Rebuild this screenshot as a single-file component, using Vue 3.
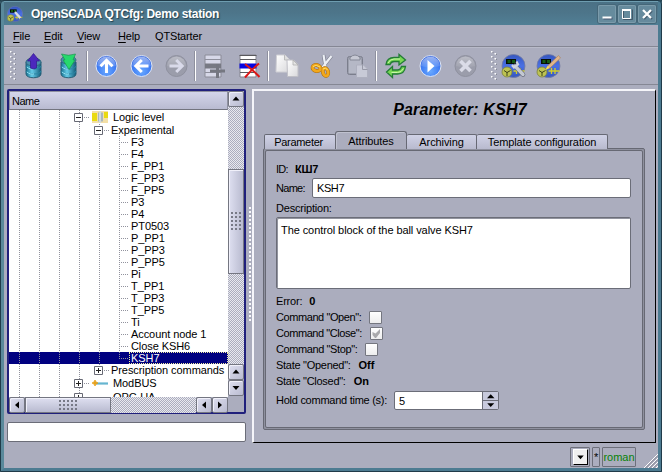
<script setup>
const leaves = ['F3', 'F4', 'F_PP1', 'F_PP3', 'F_PP5', 'P3', 'P4', 'PT0503', 'P_PP1', 'P_PP3', 'P_PP5', 'Pi', 'T_PP1', 'T_PP3', 'T_PP5', 'Ti', 'Account node 1', 'Close KSH6', 'KSH7']
const rows = [
  { text: 'Logic level', guides: 3, box: '-', icon: 'level', tall: true },
  { text: 'Experimental', guides: 4, box: '-' },
  ...leaves.map((text, i) => ({ text, guides: 5, last: i === leaves.length - 1, selected: text === 'KSH7' })),
  { text: 'Prescription commands', guides: 4, box: '+', end: true },
  { text: 'ModBUS', guides: 3, box: '+', icon: 'bus', tall: true },
  { text: 'OPC-UA', guides: 3, box: '+', icon: 'none', tall: true }
]
const tabs = [
  { text: 'Parameter', cls: 't1' },
  { text: 'Attributes', cls: 't2 active' },
  { text: 'Archiving', cls: 't3' },
  { text: 'Template configuration', cls: 't4' }
]
const menu = [['F', 'ile', 'm1'], ['E', 'dit', 'm2'], ['V', 'iew', 'm3'], ['H', 'elp', 'm4']]
</script>

<template>
  <div class="window">
    <svg width="0" height="0" class="defs">
      <defs>
        <radialGradient id="blue" cx=".5" cy=".75" r=".75"><stop offset="0" stop-color="#69a9ff" /><stop offset=".6" stop-color="#3e7cf4" /><stop offset="1" stop-color="#2456d8" /></radialGradient>
        <linearGradient id="shine" x1="0" y1="0" x2="0" y2="1"><stop offset="0" stop-color="#fff" stop-opacity=".55" /><stop offset="1" stop-color="#fff" stop-opacity=".08" /></linearGradient>
        <linearGradient id="cyl" x1="0" x2="1"><stop offset="0" stop-color="#17708f" /><stop offset=".4" stop-color="#64cbe8" /><stop offset="1" stop-color="#145c7a" /></linearGradient>
        <linearGradient id="page" x1="0" y1="0" x2="1" y2="1"><stop offset="0" stop-color="#fff" /><stop offset="1" stop-color="#d9d9dc" /></linearGradient>
        <linearGradient id="globe" x1="0" y1="0" x2="0" y2="1"><stop offset="0" stop-color="#3556c0" /><stop offset=".5" stop-color="#4a70e4" /><stop offset="1" stop-color="#3557bf" /></linearGradient>
        <g id="scada">
          <circle cx="12" cy="12" r="11.5" fill="url(#globe)" stroke="#747ba0" stroke-width=".8" />
          <rect x="4.500" y="5" width="10" height="5" fill="#061006" />
          <path d="M6 6h3v3H6zM10.500 6h3v3h-3z" fill="#145a14" />
          <path d="M12 17h11M15 14v6M18.500 14v6" stroke="#d5cf27" stroke-width="1.300" />
          <circle cx="5.500" cy="18" r="5" fill="#bdc352" stroke="#7c813a" stroke-width=".8" />
          <path d="M2.500 16.500l3 2 3.500-2M5.500 18v4" stroke="#3f441d" fill="none" />
        </g>
      </defs>
    </svg>

    <header class="titlebar">
      <svg class="appicon" viewBox="0 0 24 24"><use href="#scada" /><path d="M12 9l8 9" stroke="#d9dde5" stroke-width="3.500" /></svg>
      <span class="wtitle">OpenSCADA QTCfg: Demo station</span>
      <div class="wbtns">
        <svg viewBox="0 0 18 18"><path d="M5.500 13.500h9" stroke="#335" stroke-width="2" opacity=".6" /><path d="M4.500 12.500h9" stroke="#fff" stroke-width="2" /></svg>
        <svg viewBox="0 0 18 18"><path d="M5.500 6v8.500h9v-10" stroke="#345" fill="none" opacity=".7" /><path d="M4.500 5.500v8h8v-8z" stroke="#fff" fill="none" /><path d="M4 5h9" stroke="#fff" stroke-width="2" /></svg>
        <svg viewBox="0 0 18 18"><path d="M6 6l8 8M14 6l-8 8" stroke="#345" stroke-width="2" opacity=".6" /><path d="M5 5l8 8M13 5l-8 8" stroke="#fff" stroke-width="2.200" /></svg>
      </div>
    </header>

    <nav class="menubar">
      <span v-for="m in menu" :key="m[1]" :class="m[2]"><u>{{ m[0] }}</u>{{ m[1] }}</span>
      <span class="m5">QTStarter</span>
    </nav>

    <div class="toolbar">
      <svg class="handle" viewBox="0 0 6 30"><g fill="#fff"><path v-for="n in 6" :key="n" :d="`M0 ${n * 5 - 5}h1.500v1.500h-1.500zM3.500 ${n * 5 - 3}h1.500v1.500h-1.500z`" /></g><path v-for="n in 6" :key="'s' + n" :d="`M1.500 ${n * 5 - 4}h1v1h-1zM5 ${n * 5 - 2}h1v1h-1z`" fill="#858793" /></svg>
      <!-- load from and save to database -->
      <svg class="ic" viewBox="0 0 35 36"><path d="M10 14v12c0 5 15 5 15 0V14z" fill="url(#cyl)" stroke="#296078" /><ellipse cx="17.500" cy="14" rx="7.500" ry="4" fill="#4c8fae" stroke="#336b80" /><path d="M10 18c0 4 15 4 15 0M10 23c0 4 15 4 15 0" fill="none" stroke="#2b87a6" /><path d="M11 19c2 2 5 2.500 7 2M11 24c2 2 5 2.500 7 2" fill="none" stroke="#94e5f5" /><path d="M17.500 5.500l6 7.500h-3v7l-3 1-3-1v-7h-3z" fill="#4c28bd" stroke="#33168d" stroke-width=".7" /></svg>
      <svg class="ic" viewBox="0 0 35 36"><path d="M10 14v12c0 5 15 5 15 0V14z" fill="url(#cyl)" stroke="#296078" /><ellipse cx="17.500" cy="12" rx="7.500" ry="4" fill="#4c8fae" stroke="#336b80" /><path d="M10 18c0 4 15 4 15 0M10 23c0 4 15 4 15 0" fill="none" stroke="#2b87a6" /><path d="M11 19c2 2 5 2.500 7 2M11 24c2 2 5 2.500 7 2" fill="none" stroke="#94e5f5" /><path d="M10.500 6q7 2.500 14 0l-2.500 6h2l-6 9.500-6-9.500h2z" fill="#27d96c" stroke="#16984a" stroke-width=".7" /></svg>
      <i class="sep"></i>
      <svg class="ic" viewBox="0 0 35 36"><circle cx="17.500" cy="18" r="10.500" fill="url(#blue)" stroke="#dce4f5" /><path d="M8 18a9.500 9.500 0 0 1 19 0q-9.500 3-19 0" fill="url(#shine)" /><path d="M17.500 25V12.500M11.500 18.300l6-6 6 6" stroke="#fff" stroke-width="3" fill="none" /></svg>
      <svg class="ic" viewBox="0 0 35 36"><circle cx="17.500" cy="18" r="10.500" fill="url(#blue)" stroke="#dce4f5" /><path d="M8 18a9.500 9.500 0 0 1 19 0q-9.500 3-19 0" fill="url(#shine)" /><path d="M24.500 18H12M17.800 12l-6 6 6 6" stroke="#fff" stroke-width="3" fill="none" /></svg>
      <svg class="ic" viewBox="0 0 35 36"><circle cx="17.500" cy="18" r="10.500" fill="#9b9dab" stroke="#8f919f" /><path d="M8 18a9.500 9.500 0 0 1 19 0q-9.500 3-19 0" fill="url(#shine)" opacity=".6" /><path d="M10.500 18H23M17.200 12l6 6-6 6" stroke="#d9daea" stroke-width="3" fill="none" /></svg>
      <i class="sep"></i>
      <svg class="ic" viewBox="0 0 35 36"><path d="M8 7h16v22H8z" fill="#d7d8e8" stroke="#8b8c98" /><path d="M8 11.500h16M8 24.500h16" stroke="#8e8f9c" /><path d="M8 15.500h16v5H8z" fill="#777983" /><path d="M13 23h15M20.500 16v14" stroke="#757781" stroke-width="3" /></svg>
      <svg class="ic" viewBox="0 0 35 36"><path d="M8 7h16v22H8z" fill="#fff" stroke="#858590" /><path d="M7.500 7.500h17M8 11.500h16M8 24.500h16" stroke="#5a5a5e" /><path d="M7.500 15.500h17v5h-17z" fill="#0505e2" /><path d="M13 16c5 4 11 9 14.500 13M27 15.500c-5 4-9 8-14 14" stroke="#dc1616" stroke-width="2" fill="none" /></svg>
      <i class="sep"></i>
      <svg class="ic" viewBox="0 0 35 36"><path d="M6.500 7h8.500l4.500 4.500v12.500H6z" fill="url(#page)" stroke="#cfcfd4" /><path d="M14.500 7v5H19" fill="#ddd" stroke="#bbb" /><path d="M17 12h6.500l4.500 4.500v12H17.500z" fill="url(#page)" stroke="#bfbfc6" /><path d="M23 12v5h5z" fill="#e4e4e4" stroke="#aaa" stroke-width=".7" /></svg>
      <svg class="ic" viewBox="0 0 35 36"><path d="M18.500 7l2 12M26.500 8l-9.500 12" stroke="#7f8291" stroke-width="3.600" /><path d="M18.500 7l2 12M26.500 8l-9.500 12" stroke="#eceff5" stroke-width="2.200" /><ellipse cx="11.500" cy="20" rx="4" ry="3" transform="rotate(15 11.500 20)" fill="none" stroke="#a9690a" stroke-width="3.700" /><ellipse cx="20.500" cy="24" rx="2.600" ry="4" transform="rotate(-15 20.500 24)" fill="none" stroke="#a9690a" stroke-width="3.700" /><ellipse cx="11.500" cy="20" rx="4" ry="3" transform="rotate(15 11.500 20)" fill="none" stroke="#f2a81c" stroke-width="2.800" /><ellipse cx="20.500" cy="24" rx="2.600" ry="4" transform="rotate(-15 20.500 24)" fill="none" stroke="#f2a81c" stroke-width="2.800" /><path d="M8 18.500q3-2.500 7 .5M18 21q3-2.500 4.500 1" fill="none" stroke="#ffe06a" /></svg>
      <svg class="ic" viewBox="0 0 35 36"><rect x="7.500" y="8.500" width="15" height="18" rx="2" fill="#9da0ae" stroke="#7b7e8c" /><path d="M9 11h12v14H9z" fill="#b5b8c6" /><path d="M10 12V9.500q5-5 10 0V12z" fill="#c6c8d3" stroke="#858896" /><path d="M16.500 17h7l4 4v8.500h-11z" fill="#c8cad7" stroke="#aeb0bf" /><path d="M22.500 17v4.500h5" fill="none" stroke="#9799a7" /></svg>
      <i class="sep"></i>
      <svg class="ic" viewBox="0 0 35 36"><path d="M8 16.500q1-7 8-7h5V6.500l6.500 5.500-6.500 5v-3.500h-5q-3 0-4 3z" fill="#77d853" stroke="#237c36" stroke-width="1.300" /><path d="M27.500 18.500q-1 7.500-8 7.500h-5v3.500L8.500 24l6-5.500V22h5q3 0 4-3.500z" fill="#77d853" stroke="#237c36" stroke-width="1.300" /><path d="M10 15q2-4 6-4h6M25.500 20.500q-2 4-6 4h-6" fill="none" stroke="#c9f6ab" /></svg>
      <svg class="ic" viewBox="0 0 35 36"><circle cx="17.500" cy="18" r="10.500" fill="url(#blue)" stroke="#dce4f5" /><path d="M8 18a9.500 9.500 0 0 1 19 0q-9.500 3-19 0" fill="url(#shine)" /><path d="M14.500 12l7 6-7 6.500z" fill="#fff" /></svg>
      <svg class="ic" viewBox="0 0 35 36"><circle cx="17.500" cy="18" r="10.500" fill="#9b9dab" stroke="#8f919f" /><path d="M8 18a9.500 9.500 0 0 1 19 0q-9.500 3-19 0" fill="url(#shine)" opacity=".6" /><path d="M12.500 13l10 10M22.500 13l-10 10" stroke="#dbdce8" stroke-width="3.600" /></svg>
      <svg class="handle second" viewBox="0 0 6 30"><g fill="#fff"><path v-for="n in 6" :key="n" :d="`M0 ${n * 5 - 5}h1.500v1.500h-1.500zM3.500 ${n * 5 - 3}h1.500v1.500h-1.500z`" /></g><path v-for="n in 6" :key="'s' + n" :d="`M1.500 ${n * 5 - 4}h1v1h-1zM5 ${n * 5 - 2}h1v1h-1z`" fill="#858793" /></svg>
      <svg class="ic" viewBox="0 0 35 36"><use href="#scada" x="5.500" y="6" /><path d="M19 18l8 8.500" stroke="#5e6274" stroke-width="4.600" stroke-linecap="round" /><path d="M19 18l8 8.500" stroke="#c3c8d2" stroke-width="3.400" stroke-linecap="round" /><path d="M16 17l2 2.500 4-3-1.500-3" stroke="#cfd3dc" stroke-width="2.200" fill="none" /></svg>
      <svg class="ic" viewBox="0 0 35 36"><use href="#scada" x="5.500" y="6" /><path d="M17 17.500L27.500 7.500l2 2.500-10.500 10-4 1z" fill="#e0b58a" stroke="#a67f5d" stroke-width=".6" /><path d="M14.500 22l2-4 2 2z" fill="#f4e05b" /></svg>
    </div>

    <main class="body">
      <section class="left">
        <div class="treeframe">
          <div class="treemain">
            <div class="colhead">Name</div>
            <div class="tree">
              <div v-for="r in rows" :key="r.text" class="row" :class="{ tall: r.tall, selected: r.selected }">
                <i v-for="g in r.guides" :key="g" class="guide"></i>
                <span v-if="r.box" class="node" :class="{ end: r.end }"><svg viewBox="0 0 9 9"><path d="M.5.5h8v8h-8z" fill="#fff" stroke="#676974" /><path d="M2 4.500h5" stroke="#222" /><path v-if="r.box === '+'" d="M4.500 2v5" stroke="#222" /></svg></span>
                <span v-else class="tee" :class="{ last: r.last }"></span>
                <svg v-if="r.icon === 'level'" class="ricon" viewBox="0 0 16 12"><path d="M0 0h16v12H0z" fill="#f3dfa6" /><path d="M0 2h5v8H0zM12 1h4v6h-4z" fill="#e9da10" /><path d="M6 1.500h5v9H6z" fill="#a9b6bd" /><path d="M7 0h2v12H7z" fill="#d0dadd" /></svg>
                <svg v-if="r.icon === 'bus'" class="ricon" viewBox="0 0 16 12"><path d="M4 6.500h12" stroke="#47a4c4" stroke-width="2" /><path d="M6 6h10" stroke="#a0d7e6" stroke-width=".7" /><path d="M3 3l1 2 2 1-2 1-1 2-1-2-2-1 2-1z" fill="#e7a21d" stroke="#e7a21d" stroke-width=".8" /></svg>
                <span v-if="r.icon === 'none'" class="ricon"></span>
                <span class="rtext">{{ r.text }}</span>
              </div>
            </div>
            <div class="hscroll">
              <span class="sbtn"><svg viewBox="0 0 16 16"><path d="M10 4.500v7L6 8z" /></svg></span>
              <span class="hthumb"><i class="hgrip"></i></span>
              <span class="track"></span>
              <span class="sbtn"><svg viewBox="0 0 16 16"><path d="M10 4.500v7L6 8z" /></svg></span>
              <span class="sbtn"><svg viewBox="0 0 16 16"><path d="M6 4.500v7L10 8z" /></svg></span>
            </div>
          </div>
          <div class="vscroll">
            <span class="sbtn"><svg viewBox="0 0 16 16"><path d="M4.500 9.500h7L8 5.500z" /></svg></span>
            <span class="track upper"></span>
            <span class="vthumb"><i class="vgrip"></i></span>
            <span class="track"></span>
            <span class="sbtn"><svg viewBox="0 0 16 16"><path d="M4.500 9.500h7L8 5.500z" /></svg></span>
            <span class="sbtn"><svg viewBox="0 0 16 16"><path d="M4.500 6h7L8 10z" /></svg></span>
            <span class="corner"></span>
          </div>
        </div>
        <div class="filter"></div>
      </section>

      <div class="splitter"><i></i></div>

      <section class="right">
        <h1>Parameter: KSH7</h1>
        <div class="tabs"><div v-for="t in tabs" :key="t.text" class="tab" :class="t.cls">{{ t.text }}</div></div>
        <div class="pane"><div class="inner">
          <div class="line id"><span>ID:</span><b>КШ7</b></div>
          <div class="line name"><span>Name:</span><div class="field">KSH7</div></div>
          <div class="line desc">Description:</div>
          <div class="area">The control block of the ball valve KSH7</div>
          <div class="line err"><span>Error:</span><b>0</b></div>
          <div class="line c1"><span>Command "Open":</span><i class="check"></i></div>
          <div class="line c2"><span>Command "Close":</span><i class="check"><svg viewBox="0 0 11 11"><path d="M1.500 4l3 1.500L9 1v4L5 10H4L1.500 7z" fill="#a9a9ac" /></svg></i></div>
          <div class="line c3"><span>Command "Stop":</span><i class="check"></i></div>
          <div class="line s1"><span>State "Opened":</span><b>Off</b></div>
          <div class="line s2"><span>State "Closed":</span><b>On</b></div>
          <div class="line hold"><span>Hold command time (s):</span>
            <div class="spin"><span class="val">5</span><div class="spins"><svg viewBox="0 0 15 8"><path d="M4 6h7.500L7.700 2z" /></svg><svg viewBox="0 0 15 8"><path d="M4 2.500h7.500L7.700 6.500z" /></svg></div></div>
          </div>
        </div></div>
      </section>
    </main>

    <footer class="status">
      <div class="cell drop"><span><svg viewBox="0 0 13 15"><path d="M3 6h7L6.500 10z" /></svg></span></div>
      <div class="cell star">*</div>
      <div class="cell user">roman</div>
      <svg class="grip" viewBox="0 0 14 14"><path d="M0 14L14 0M4 14L14 4M8 14l6-6M12 14l2-2" stroke="#fff" /><path d="M1.500 14L14 1.500M5.500 14L14 5.500M9.500 14L14 9.500" stroke="#7d7f8b" stroke-width=".8" /></svg>
    </footer>
  </div>
</template>

<style>
body { overflow: hidden; background: #24424f; }
</style>

<style scoped>
* { box-sizing: border-box; }
.window { width: 662px; height: 472px; background: #abadbe; border: solid; border-width: 1px 4px 4px 4px; border-color: #28404c #4c7b91 #4c7b91 #5a899b; font: 11px/12px "Liberation Sans", sans-serif; color: #000; display: flex; flex-direction: column; outline: 1px solid #203b49; outline-offset: -1px; border-radius: 4px 4px 0 0; white-space: nowrap; overflow: hidden; }
.defs { position: absolute; }
.titlebar { height: 24px; flex: none; margin: 0 -3px; padding: 2px 5px 0 6px; display: flex; align-items: center; background: linear-gradient(#6e9db0 0 1px, #4b7185 1px, #4d758a 50%, #517f95); }
.appicon { width: 16px; height: 16px; }
.wtitle { margin-left: 8px; font: bold 12px/16px "Liberation Sans", sans-serif; color: #fff; text-shadow: 1px 1px 1px #24404e; letter-spacing: -.28px; flex: 1; padding-bottom: 1px; }
.wbtns { display: flex; gap: 2px; }
.wbtns svg { width: 18px; height: 18px; border-radius: 2px; background: #668b9d; box-shadow: inset 0 0 0 1px #7b9bab, 0 0 0 1px #456779; }
.menubar { height: 22px; flex: none; border-bottom: 1px solid #858794; padding: 5px 0 0 9px; display: flex; letter-spacing: -.15px; }
.menubar u { text-underline-offset: 2px; }
.m1 { width: 31px; } .m2 { width: 33px; } .m3 { width: 41px; } .m4 { width: 37px; }
.toolbar { height: 38px; flex: none; display: flex; align-items: center; border-bottom: 1px solid #858794; border-top: 1px solid #b9bbc9; padding-left: 6px; }
.handle { width: 6px; height: 30px; }
.second { margin: 0 -1px 0 8px; }
.ic { width: 35px; height: 36px; flex: none; }
.sep { width: 3px; height: 30px; border-left: 1px solid #8e909e; box-shadow: inset 1px 0 #fff; flex: none; }
.body { display: flex; height: 358px; flex: none; padding: 4px 0 0 3px; }
.left { width: 239px; }
.treeframe { height: 325px; border: 2px solid #20207c; border-radius: 2px; display: flex; background: #abadbe; }
.treemain { width: 219px; display: flex; flex-direction: column; }
.colhead { height: 19px; background: linear-gradient(#d3d5ea, #b9bbd1); border: 1px solid #8f91a0; border-bottom-color: #72747f; padding: 3px 2px; flex: none; letter-spacing: -.5px; }
.tree { height: 287px; background: #fff; overflow: hidden; flex: none; }
.row { height: 12px; display: flex; align-items: center; }
.row.tall { height: 14px; }
.guide { width: 20px; align-self: stretch; flex: none; background: repeating-linear-gradient(#91929d 0 1px, transparent 1px 2px) 10px 0 / 1px 100% no-repeat; }
.node { width: 20px; align-self: stretch; flex: none; display: flex; align-items: center; padding-left: 5px; background: repeating-linear-gradient(90deg, #91929d 0 1px, transparent 1px 2px) 15px 50% / 5px 1px no-repeat, repeating-linear-gradient(#91929d 0 1px, transparent 1px 2px) 10px 0 / 1px 100% no-repeat; }
.node svg { width: 9px; height: 9px; }
.tee { width: 20px; height: 100%; flex: none; background: repeating-linear-gradient(90deg, #91929d 0 1px, transparent 1px 2px) 10px 6px / 9px 1px no-repeat, repeating-linear-gradient(#91929d 0 1px, transparent 1px 2px) 10px 0 / 1px 100% no-repeat; }
.tee.last, .node.end { background-size: 9px 1px, 1px 6px; }
.ricon { width: 16px; height: 12px; margin: 0 3px 0 3px; flex: none; }
.rtext { padding-left: 2px; line-height: 12px; letter-spacing: -.08px; }
.selected { background: #000080; color: #fff; }
.selected .rtext { flex: 1; outline: 1px dotted #f0eda0; outline-offset: -1px; }
.hscroll { height: 16px; display: flex; flex: none; }
.sbtn { width: 16px; height: 16px; flex: none; border: 1px solid #747681; border-radius: 2px; background: linear-gradient(135deg, #dedff0, #b9bbd0); box-shadow: inset 1px 1px #f0f0fa; }
.sbtn svg { display: block; width: 16px; height: 16px; margin: -1px; }
.track { flex: 1; background: conic-gradient(#abadbe 25%, #e9e9ef 0 50%, #abadbe 0 75%, #e9e9ef 0) 0 0 / 2px 2px; }
.hthumb { width: 86px; border: 1px solid #747681; background: linear-gradient(#dedff0, #b9bbd0); box-shadow: inset 1px 1px #f0f0fa; padding: 2px 0 0 33px; }
.hgrip, .vgrip { display: block; background: radial-gradient(circle at 1px 1px, #777986 0 .9px, transparent 1px) 0 0 / 4px 4px; }
.hgrip { width: 18px; height: 11px; }
.vscroll { width: 16px; display: flex; flex-direction: column; }
.upper { flex: 0 0 62px; }
.vthumb { height: 105px; flex: none; border: 1px solid #747681; background: linear-gradient(90deg, #dedff0, #b9bbd0); box-shadow: inset 1px 1px #f0f0fa; padding: 42px 0 0 2px; }
.vgrip { width: 11px; height: 20px; }
.corner { height: 16px; }
.filter { margin-top: 8px; height: 20px; background: #fff; border: 1px solid #6b6d78; border-radius: 2px; }
.splitter { width: 6px; padding: 117px 0 0 2px; }
.splitter i { display: block; width: 4px; height: 115px; background: conic-gradient(from 0deg at 2px 2px, transparent 75%, #f8f8fb 0) 1px 1px / 4px 4px; }
.right { width: 404px; height: 354px; border: solid; border-width: 2px 1px 1px 2px; border-color: #f5f5fa #000 #000 #f5f5fa; padding: 0 10px 0 9px; }
h1 { margin: 0; height: 40px; padding: 9px 0 0 12px; font: italic bold 16px/20px "Liberation Sans", sans-serif; text-align: center; letter-spacing: .2px; }
.tabs { display: flex; align-items: flex-end; height: 18px; padding-left: 1px; margin-bottom: -1px; position: relative; }
.tab { height: 15px; border: 1px solid #676974; border-bottom: 0; border-left: 0; background: linear-gradient(#d0d2e6, #b8bace); border-radius: 2px 2px 0 0; text-align: center; line-height: 15px; letter-spacing: -.1px; }
.t1 { width: 72px; border-left: 1px solid #676974; padding-right: 3px; letter-spacing: -.3px; } .t3 { width: 70px; } .t4 { width: 131px; }
.tab.active { width: 72px; margin-left: -1px; height: 18px; line-height: 18px; background: #abadbe; border: 1px solid #676974; border-bottom: 0; border-radius: 3px 3px 0 0; box-shadow: inset 1px 1px #bfc1cf; }
.pane { width: 382px; height: 282px; border: 1px solid #676974; border-radius: 2px; padding: 1px; background: #8f919f; }
.inner { height: 100%; border: 1px solid #676974; border-radius: 2px; background: #abadbe; padding: 10px 11px 0 10px; }
.line { display: flex; align-items: center; height: 16px; }
.id b { margin-left: 7px; }
.id span, .name span { letter-spacing: -.7px; }
.id b { letter-spacing: -.2px; }
.name { height: 20px; margin-top: 1px; justify-content: space-between; }
.field { width: 319px; height: 20px; background: #fff; border: 1px solid #6b6d78; border-radius: 2px; padding: 3px 4px; letter-spacing: -.4px; }
.desc { height: 19px; letter-spacing: -.2px; }
.area { height: 72px; background: #fff; border: 1px solid #6b6d78; box-shadow: inset 1px 1px #92949f; border-radius: 2px; padding: 6px 4px; margin-bottom: 4px; letter-spacing: -.08px; }
.err span { letter-spacing: -.2px; }
.err b { margin-left: 7px; }
.check { width: 13px; height: 13px; border: 1px solid #74767f; border-radius: 1px; background: linear-gradient(#fff, #ededee); margin-left: 8px; }
.check svg { display: block; width: 11px; height: 11px; }
.c1 span { letter-spacing: -.42px; }
.c2 span { letter-spacing: -.44px; }
.c3 span { letter-spacing: -.4px; }
.s1 span, .s2 span { letter-spacing: -.28px; }
.s1 b, .s2 b { margin-left: 8px; }
.hold { height: 22px; }
.hold > span { letter-spacing: -.26px; }
.spin { width: 105px; height: 19px; margin-left: 7px; background: #fff; border: 1px solid #6b6d78; border-radius: 2px; display: flex; justify-content: space-between; }
.val { padding: 3px 4px; }
.spins { width: 16px; border-left: 1px solid #6b6d78; background: #c8cadd; }
.spins svg { display: block; width: 15px; height: 8.5px; }
.spins svg + svg { border-top: 1px solid #6b6d78; }
.status { flex: 1; display: flex; justify-content: flex-end; padding-top: 4px; gap: 2px; }
.cell { height: 20px; border: 1px solid #6d6f7a; border-radius: 1px; }
.drop { width: 20px; padding: 1px 2px; }
.drop span { display: block; width: 15px; height: 16px; background: #efefef; border: 1px solid #fff; border-right: 1px solid #000; border-bottom: 1px solid #000; }
.drop svg { display: block; width: 13px; height: 14px; }
.star { width: 8px; line-height: 18px; text-align: center; padding: 0 1px; }
.user { width: 34px; color: #078207; line-height: 19px; text-align: center; }
.grip { width: 14px; height: 14px; margin: 7px 0 0 6px; }
</style>
